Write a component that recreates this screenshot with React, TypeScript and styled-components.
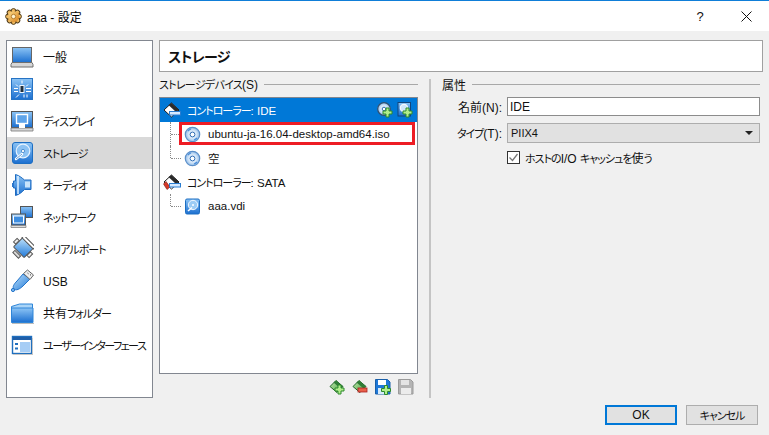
import React from "react";
import styled, { createGlobalStyle } from "styled-components";

const Global = createGlobalStyle`
  html, body { margin: 0; padding: 0; background: #f0f0f0; }
  body { font-family: "Liberation Sans", "Noto Sans CJK JP", sans-serif; font-size: 12px; color: #111; font-feature-settings: "palt"; }
`;

const Kana = styled.span<{ $spacing?: number }>`
  font-size: 11px; letter-spacing: ${(p) => p.$spacing ?? -1}px;
`;
const Window = styled.div`
  width: 769px; height: 435px; display: flex; flex-direction: column; overflow: hidden; background: #f0f0f0;
`;
const TitleBar = styled.header`
  height: 30px; flex: none; background: #fff; border-top: 1px solid #0f7ed8; display: flex; align-items: center; padding: 0 0 0 5px;
`;
const TitleText = styled.span`
  margin-left: 5px; font-size: 12px; color: #000; flex: 1;
`;
const TitleButton = styled.span`
  width: 46px; height: 30px; display: flex; align-items: center; justify-content: center; font-size: 13px; color: #111;
`;
const Body = styled.div`
  flex: 1; display: flex; gap: 6px; padding: 9px 6px 0 6px; max-height: 367px; box-sizing: border-box;
`;
const Sidebar = styled.nav`
  width: 147px; height: 358px; box-sizing: border-box; background: #fff; border: 1px solid #828790; flex: none;
`;
const NavItem = styled.div<{ $active?: boolean }>`
  height: 32px; display: flex; align-items: center; padding-left: 3px; background: ${(p) => (p.$active ? "#d9d9d9" : "transparent")};
  font-size: 12px; white-space: nowrap; line-height: 16px;
  svg { flex: none; margin-right: 9px; }
`;
const NavLabel = styled.span`
  padding-top: 2px;
`;
const Main = styled.main`
  width: 604px; height: 358px; display: flex; flex-direction: column; flex: none;
`;
const Header = styled.div`
  height: 32px; box-sizing: border-box; background: #fff; border: 1px solid #a0a0a0; display: flex; align-items: center; padding-left: 8px;
  font-size: 14px; font-weight: 700; color: #111; flex: none; letter-spacing: -0.6px;
`;
const Panes = styled.div`
  flex: 1; display: flex; min-height: 0;
`;
const StoragePane = styled.section`
  width: 259px; flex: none; display: flex; flex-direction: column;
`;
const GroupTitle = styled.div`
  height: 24px; margin-bottom: 1px; flex: none; display: flex; align-items: center; gap: 6px; font-size: 12px; white-space: nowrap;
  &::after { content: ""; flex: 1; height: 1px; background: #a8a8a8; }
`;
const Tree = styled.div`
  height: 277px; flex: none; box-sizing: border-box; background: #fff; border: 1px solid #828790;
`;
const TreeRow = styled.div<{ $selected?: boolean; $leaf?: boolean }>`
  position: relative; height: 24px; box-sizing: border-box; display: flex; align-items: center; white-space: nowrap;
  padding-left: ${(p) => (p.$leaf ? "24px" : "3px")};
  background: ${(p) => (p.$selected ? "#0078d7" : "transparent")};
  color: ${(p) => (p.$selected ? "#fff" : "#111")};
`;
const Branch = styled.span<{ $continues?: boolean }>`
  position: absolute; left: 10px; top: 0; width: 10px; height: ${(p) => (p.$continues ? "24px" : "12px")};
  border-left: 1px dotted #8a8a8a;
  &::after { content: ""; position: absolute; left: 0; top: 12px; width: 10px; border-top: 1px dotted #8a8a8a; }
`;
const Highlight = styled.span`
  position: absolute; left: 19px; top: 0; width: 236px; height: 23px; box-sizing: border-box; border: 3px solid #ed1c24;
`;
const RowLabel = styled.span<{ $gap?: number }>`
  margin-left: ${(p) => p.$gap ?? 7}px; font-size: 11.5px;
`;
const RowTools = styled.span`
  margin-left: auto; display: flex; gap: 4px; padding-right: 4px; align-items: center;
`;
const TreeToolbar = styled.div`
  height: 24px; display: flex; justify-content: flex-end; align-items: flex-start; gap: 7px; padding: 5px 4px 0 0; box-sizing: border-box; flex: none;
`;
const Splitter = styled.div`
  width: 2px; flex: none; margin: 7px 0 0 11px; background: #c4c4c4;
`;
const PropsPane = styled.section`
  flex: 1; padding: 0 3px 0 11px; display: flex; flex-direction: column; min-width: 0;
`;
const Form = styled.div`
  display: grid; grid-template-columns: 65px 253px; row-gap: 7px; align-items: center;
`;
const FieldLabel = styled.label`
  text-align: right; padding-right: 5px; font-size: 12px; white-space: nowrap;
`;
const TextInput = styled.div`
  height: 19px; box-sizing: border-box; background: #fff; border: 1px solid #8c8c8c; display: flex; align-items: center; padding-left: 2px; font-size: 12px;
`;
const Combo = styled.div`
  height: 20px; box-sizing: border-box; background: #e1e1e1; border: 1px solid #adadad; display: flex; align-items: center; justify-content: space-between; padding: 0 6px 0 3px; font-size: 11px;
`;
const Arrow = styled.span`
  width: 0; height: 0; border-left: 4px solid transparent; border-right: 4px solid transparent; border-top: 4px solid #222;
`;
const CheckRow = styled.div`
  grid-column: 2; display: flex; align-items: center; gap: 5px; font-size: 12px; white-space: nowrap; height: 14px;
`;
const CheckBox = styled.span`
  width: 13px; height: 13px; box-sizing: border-box; background: #fff; border: 1px solid #333; display: flex; align-items: center; justify-content: center; flex: none;
`;
const Footer = styled.footer`
  height: 30px; flex: none; display: flex; justify-content: flex-end; gap: 9px; padding: 7px 11px 0 0;
`;
const Button = styled.button<{ $primary?: boolean }>`
  width: 72px; height: 20px; box-sizing: border-box; padding: 0; margin: 0; font: inherit; font-size: 12px; color: #111; background: #e1e1e1;
  border: ${(p) => (p.$primary ? "2px solid #0078d7" : "1px solid #adadad")}; display: flex; align-items: center; justify-content: center;
`;
const Defs = styled.svg`
  display: block; width: 0; height: 0; flex: none;
`;

const Gradients = () => (
  <Defs aria-hidden="true">
    <defs>
      <linearGradient id="blue" x1="0" y1="0" x2="0" y2="1"><stop offset="0" stopColor="#8cc4f5" /><stop offset="1" stopColor="#1b6fd0" /></linearGradient>
      <linearGradient id="blueD" x1="0" y1="0" x2="1" y2="1"><stop offset="0" stopColor="#bfe2fb" /><stop offset="1" stopColor="#1f78d8" /></linearGradient>
      <linearGradient id="green" x1="0" y1="0" x2="1" y2="1"><stop offset="0" stopColor="#c4edb0" /><stop offset="1" stopColor="#3e9a3a" /></linearGradient>
      <linearGradient id="orange" x1="0" y1="0" x2="1" y2="1"><stop offset="0" stopColor="#fbdc8c" /><stop offset="1" stopColor="#d9821c" /></linearGradient>
      <radialGradient id="cd"><stop offset="0" stopColor="#fff" /><stop offset="0.6" stopColor="#cfe3f7" /><stop offset="1" stopColor="#8fb9e6" /></radialGradient>
    </defs>
  </Defs>
);

const I = ({ s = 24, children }: { s?: number; children: React.ReactNode }) => (
  <svg width={s} height={s} viewBox={`0 0 ${s} ${s}`}>{children}</svg>
);

const Gear = () => (
  <I s={17}>
    <g fill="url(#orange)" stroke="#4f3a17" strokeWidth="1">
      {[0, 45, 90, 135, 180, 225, 270, 315].map((a) => (
        <circle key={a} cx="8.500" cy="3" r="2.400" transform={`rotate(${a} 8.500 8.500)`} />
      ))}
    </g>
    <circle cx="8.500" cy="8.500" r="5.600" fill="url(#orange)" />
    <circle cx="8.500" cy="8.500" r="2.200" fill="#fff3d0" stroke="#a56b1c" strokeWidth=".8" />
  </I>
);
const Laptop = () => (
  <I>
    <rect x="2.500" y="2.500" width="19" height="15" fill="url(#blue)" stroke="#666" />
    <path d="M1 19.500l1-2h20l1 2v2.500H1z" fill="#d6d6d6" stroke="#6f6f6f" />
  </I>
);
const SystemIcon = () => (
  <I>
    <rect x="1.500" y="1.500" width="21" height="21" fill="url(#blue)" stroke="#2673c4" />
    <rect x="10" y="8.500" width="4" height="7" fill="#20303f" stroke="#eef6ff" />
    <path d="M12 3.500v3M6 7.500l2 2M18 7.500l-2 2M4 11.500h4M16 11.500h5M4 14.500h4M16 14.500h5M6 20.500l3-3M14 17.500v3M17 17.500v3" stroke="#fff" strokeWidth="1" fill="none" />
  </I>
);
const DisplayIcon = () => (
  <I>
    <rect x="1.500" y="2.500" width="21" height="16" fill="url(#blue)" stroke="#555" />
    <rect x="6.500" y="5.500" width="11" height="9" fill="#5ea4ea" stroke="#fff" strokeWidth="1.400" />
    <path d="M1 19h22v3H1z" fill="#d8d8d8" stroke="#777" strokeWidth=".8" />
    <path d="M9 15h6v4H9z" fill="#fff" />
  </I>
);
const StorageIcon = () => (
  <I>
    <rect x="2.500" y="1.500" width="20" height="21" rx="2.500" fill="url(#blue)" stroke="#1d6ec2" />
    <circle cx="13" cy="10" r="6.800" fill="#8cc2f3" stroke="#e6f3ff" strokeWidth="1.200" />
    <circle cx="13" cy="10" r="1.600" fill="#fff" stroke="#2a74bf" strokeWidth=".7" />
    <path d="M6 18l6-5" stroke="#fff" strokeWidth="2.400" strokeLinecap="round" />
    <path d="M6 18l6-5" stroke="#3c84cc" strokeWidth=".8" />
  </I>
);
const AudioIcon = () => (
  <I>
    <path d="M3.500 8h2V1.500c4 1 7 4 9 5.500h6.500v9.500H14.500c-2 2-5 5-9 6V15h-2z" fill="url(#blue)" stroke="#1e6bc0" />
    <path d="M2 10h2v4H2z" fill="#2a76cc" />
    <path d="M8 3v18" stroke="#d6ecff" strokeWidth="1.600" />
    <rect x="15" y="8.500" width="5" height="6" fill="#c7e3fb" />
  </I>
);
const NetworkIcon = () => (
  <I>
    <rect x="10.500" y="1.500" width="12" height="11" fill="url(#blue)" stroke="#555" />
    <rect x="1.500" y="9" width="14" height="11" fill="url(#blue)" stroke="#555" />
    <rect x="3.500" y="11" width="10" height="7" fill="#3d8de0" stroke="#fff" />
    <path d="M1 20.500h15v2H1z" fill="#ddd" stroke="#777" strokeWidth=".7" />
  </I>
);
const SerialIcon = () => (
  <I>
    <g transform="rotate(45 12 12)">
      <rect x="4.500" y="3.500" width="15" height="13" rx="1" fill="url(#blueD)" stroke="#565656" />
      <path d="M4 1h16v3H4z" fill="#fff" stroke="#555" />
      <path d="M8 18h8v3H8z" fill="#d9d9d9" stroke="#555" />
      <path d="M1 8h3v5H1zM20 8h3v5h-3z" fill="#eee" stroke="#555" />
    </g>
  </I>
);
const UsbIcon = () => (
  <I>
    <path d="M4 20c-2-2 0-5 3-8l6-7 7 5-7 7c-3 3-7 5-9 3z" fill="url(#blueD)" stroke="#2474c9" />
    <path d="M13.500 4.500l4-3.500 6 5-3.500 4.500z" fill="#eee" stroke="#666" />
    <circle cx="3" cy="21" r="1.600" fill="#7bb8f0" stroke="#2474c9" />
    <path d="M17.500 4l1 .8M20 5.500l1 .8" stroke="#444" />
  </I>
);
const FolderIcon = () => (
  <I>
    <path d="M1.500 5.500l8-2.500h13v5H1.500z" fill="#a9d4f7" stroke="#2e85d8" />
    <path d="M1.500 7h21.500v14.500H1.500z" fill="url(#blue)" stroke="#2e85d8" />
    <path d="M2 22.500h22" stroke="#bbb" />
  </I>
);
const UiIcon = () => (
  <I>
    <rect x="2.500" y="3.500" width="19" height="17" fill="#fff" stroke="#1f6fbe" strokeWidth="1.400" />
    <rect x="3" y="4" width="18" height="3" fill="#1f5ea8" />
    <rect x="10" y="9" width="10" height="10" fill="#a6cdf5" />
    <path d="M5 10h3v2H5zM5 14.500h3v2H5z" fill="#1f6fbe" />
    <path d="M3 21.500h20M22.500 5v17" stroke="#c6c6c6" />
  </I>
);
const Controller = ({ red }: { red?: boolean }) => (
  <I s={18}>
    <path d="M1 9l7.500-7L16 9l-7.500 7z" fill="#fff" stroke="#1e1e1e" />
    <path d="M8.500 2L16 9l-3 2-7.500-7z" fill="#2a2a2a" />
    {red && <path d="M.5 11l2.500-2.500 4 5.500-3 2.500z" fill="#d63a2a" stroke="#7a1a12" strokeWidth=".6" />}
    <rect x="6.500" y="10.500" width="11" height="3.500" fill="#d6eaff" stroke="#2a7cd0" />
  </I>
);
const Cd = () => (
  <I s={17}>
    <circle cx="8.500" cy="8.500" r="7.200" fill="url(#cd)" stroke="#5b8fc9" strokeWidth="1.200" />
    <circle cx="8.500" cy="8.500" r="2.400" fill="#fff" stroke="#2f6db5" />
    <path d="M4 5a6 6 0 0 1 3-2M13 12a6 6 0 0 1-3 2" stroke="#4a8fdc" strokeWidth="1.200" fill="none" />
  </I>
);
const Hdd = () => (
  <I s={17}>
    <rect x="1.500" y="1" width="14" height="15" rx="1.500" fill="url(#blue)" stroke="#1d6ec2" />
    <circle cx="9" cy="7" r="4.700" fill="#9cccf5" stroke="#f2f8ff" />
    <circle cx="9" cy="7" r="1" fill="#fff" />
    <path d="M4 13l4-3.500" stroke="#fff" strokeWidth="1.600" />
  </I>
);
const Plus = ({ x, y }: { x: number; y: number }) => (
  <path d={`M${x + 3} ${y}h3v3h3v3h-3v3h-3v-3h-3v-3h3z`} fill="#b2ee8c" stroke="#2c8a2c" strokeWidth="1" />
);
const AddCd = () => (
  <I s={16}>
    <circle cx="7" cy="7" r="6.300" fill="url(#cd)" stroke="#33506e" strokeWidth="1.200" />
    <circle cx="7" cy="7" r="1.800" fill="#fff" stroke="#2f6db5" />
    <Plus x={6} y={6} />
  </I>
);
const AddHdd = () => (
  <I s={16}>
    <rect x="1" y=".5" width="12.500" height="13.500" fill="url(#blue)" stroke="#12457c" />
    <circle cx="7" cy="6" r="3.800" fill="#cfe7fb" stroke="#fff" />
    <Plus x={6} y={6} />
  </I>
);
const DiamondBase = ({ children }: { children?: React.ReactNode }) => (
  <I s={16}>
    <path d="M1 7.500l6-6 7 6-6 6z" fill="url(#green)" stroke="#24642a" />
    <path d="M7 1.500l7 6-2.500 2-7-6z" fill="#2f7d36" />
    {children}
  </I>
);
const FloppyPlus = () => (
  <I s={16}>
    <path d="M.5.5h12l2.500 2.500v12H.500z" fill="#1f78d8" stroke="#1a5fa8" />
    <rect x="3" y="1" width="8" height="5" fill="#fff" />
    <rect x="3" y="9" width="9" height="6" fill="#d7ebfb" />
    <Plus x={6.500} y={6.500} />
  </I>
);
const FloppyOff = () => (
  <I s={16}>
    <path d="M.5.5h12l2.500 2.500v12H.500z" fill="#b4b4b4" stroke="#9a9a9a" />
    <rect x="3" y="1" width="8" height="5" fill="#e4e4e4" />
    <rect x="3" y="9" width="10" height="6" fill="#ececec" />
  </I>
);

const items: [string, React.ReactNode, React.ReactNode][] = [
  ["general", <Laptop />, "一般"],
  ["system", <SystemIcon />, <Kana>システム</Kana>],
  ["display", <DisplayIcon />, <Kana>ディスプレイ</Kana>],
  ["storage", <StorageIcon />, <Kana>ストレージ</Kana>],
  ["audio", <AudioIcon />, <Kana>オーディオ</Kana>],
  ["network", <NetworkIcon />, <Kana>ネットワーク</Kana>],
  ["serial", <SerialIcon />, <Kana>シリアルポート</Kana>],
  ["usb", <UsbIcon />, "USB"],
  ["shared", <FolderIcon />, <>共有<Kana>フォルダー</Kana></>],
  ["ui", <UiIcon />, <Kana $spacing={-1.5}>ユーザーインターフェース</Kana>],
];

export default function App() {
  return (
    <Window>
      <Global />
      <Gradients />
      <TitleBar>
        <Gear />
        <TitleText>aaa - 設定</TitleText>
        <TitleButton>?</TitleButton>
        <TitleButton>
          <svg width="11" height="11" viewBox="0 0 11 11"><path d="M.5.5l10 10M10.500.5l-10 10" stroke="#111" fill="none" /></svg>
        </TitleButton>
      </TitleBar>
      <Body>
        <Sidebar>
          {items.map(([k, ic, t]) => (
            <NavItem key={k} $active={k === "storage"}>{ic}<NavLabel>{t}</NavLabel></NavItem>
          ))}
        </Sidebar>
        <Main>
          <Header>ストレージ</Header>
          <Panes>
            <StoragePane>
              <GroupTitle><span><Kana $spacing={-0.7}>ストレージデバイス</Kana>(S)</span></GroupTitle>
              <Tree>
                <TreeRow $selected>
                  <Controller />
                  <RowLabel $gap={6}><Kana>コントローラー</Kana>: IDE</RowLabel>
                  <RowTools><AddCd /><AddHdd /></RowTools>
                </TreeRow>
                <TreeRow $leaf>
                  <Branch $continues />
                  <Highlight />
                  <Cd />
                  <RowLabel>ubuntu-ja-16.04-desktop-amd64.iso</RowLabel>
                </TreeRow>
                <TreeRow $leaf>
                  <Branch />
                  <Cd />
                  <RowLabel>空</RowLabel>
                </TreeRow>
                <TreeRow>
                  <Controller red />
                  <RowLabel $gap={6}><Kana>コントローラー</Kana>: SATA</RowLabel>
                </TreeRow>
                <TreeRow $leaf>
                  <Branch />
                  <Hdd />
                  <RowLabel>aaa.vdi</RowLabel>
                </TreeRow>
              </Tree>
              <TreeToolbar>
                <DiamondBase><Plus x={6} y={6} /></DiamondBase>
                <DiamondBase>
                  <rect x="6" y="9" width="9" height="4" fill="#e8604a" stroke="#a22" strokeWidth=".8" />
                </DiamondBase>
                <FloppyPlus />
                <FloppyOff />
              </TreeToolbar>
            </StoragePane>
            <Splitter />
            <PropsPane>
              <GroupTitle>属性</GroupTitle>
              <Form>
                <FieldLabel>名前(N):</FieldLabel>
                <TextInput>IDE</TextInput>
                <FieldLabel><Kana>タイプ</Kana>(T):</FieldLabel>
                <Combo>PIIX4<Arrow /></Combo>
                <CheckRow>
                  <CheckBox>
                    <svg width="11" height="11" viewBox="0 0 11 11"><path d="M1.500 5.500l3 3 5-6.500" stroke="#777" strokeWidth="1.300" fill="none" /></svg>
                  </CheckBox>
                  <span><Kana>ホストの</Kana>I/O <Kana>キャッシュを</Kana>使<Kana>う</Kana></span>
                </CheckRow>
              </Form>
            </PropsPane>
          </Panes>
        </Main>
      </Body>
      <Footer>
        <Button $primary>OK</Button>
        <Button><Kana>キャンセル</Kana></Button>
      </Footer>
    </Window>
  );
}
